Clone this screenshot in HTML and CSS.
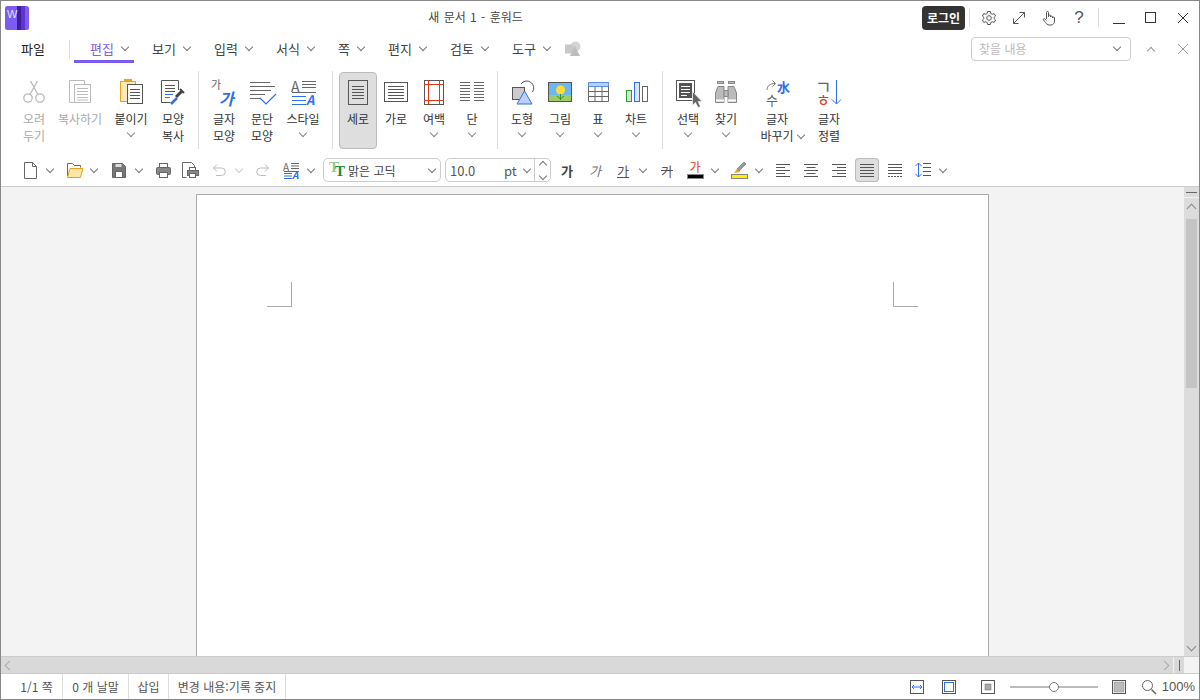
FILE: index.html
```html
<!DOCTYPE html>
<html lang="ko">
<head>
    <meta charset="UTF-8">
    <title>새 문서 1 - 훈워드</title>
    <link rel="stylesheet" href="styles.css">
</head>
<body>
<div class="window">

    <div class="titlebar">
        <svg class="logo" width="24" height="24" viewBox="0 0 24 24">
            <rect width="24" height="24" rx="2.5" fill="#7c5cf5"/>
            <rect x="12" width="4" height="24" fill="#3f1d9b"/>
            <rect x="16" width="4" height="24" fill="#5a35cf"/>
            <text x="2" y="12" class="logo-w">W</text>
        </svg>
        <div class="doc-title">새 문서 1 - 훈워드</div>
        <div class="win-controls">
            <button class="login">로그인</button>
            <span class="vsep"></span>
            <span class="win-btn first">
                <svg width="16" height="16" viewBox="0 0 16 16" fill="none" stroke="#555"><path d="M6.6 1.5h2.8l.4 2 1.5.8 1.9-.7 1.4 2.4-1.5 1.3v1.4l1.5 1.3-1.4 2.4-1.9-.7-1.5.8-.4 2H6.6l-.4-2-1.500-.8-1.900.7-1.400-2.400 1.500-1.300V7.300L1.400 6l1.400-2.400 1.900.7 1.500-.8z"/><circle cx="8" cy="8" r="2.3"/></svg>
            </span>
            <span class="win-btn">
                <svg width="14" height="14" viewBox="0 0 14 14" fill="none" stroke="#555"><path d="M1.5 12.5l11-11M7.5 1.5h5v5M1.5 7.5v5h5"/></svg>
            </span>
            <span class="win-btn">
                <svg width="16" height="16" viewBox="0 0 16 16" fill="none" stroke="#555"><path d="M5.5 9V2.5a1 1 0 0 1 2 0V7m0 0V6a1 1 0 0 1 2 0v1m0 0a1 1 0 0 1 2 0v1m0 0a1 1 0 0 1 2 0v3c0 2.5-1.5 4-3.5 4H8c-1.5 0-2.5-1-3.5-2.5L2.5 10c-.7-1 .7-2 1.5-1l1.5 1.5"/></svg>
            </span>
            <span class="win-btn help">?</span>
            <span class="vsep"></span>
            <span class="win-btn wide lead">
                <svg width="12" height="12" viewBox="0 0 12 12" fill="none" stroke="#333"><path d="M0 11.5h12"/></svg>
            </span>
            <span class="win-btn wide">
                <svg width="12" height="12" viewBox="0 0 12 12" fill="none" stroke="#333"><rect x=".5" y=".5" width="10" height="10"/></svg>
            </span>
            <span class="win-btn wide">
                <svg width="12" height="12" viewBox="0 0 12 12" fill="none" stroke="#333"><path d="M1 1l10 10M11 1L1 11"/></svg>
            </span>
        </div>
    </div>

    <div class="tabs">
        <span class="tab-file">파일</span>
        <span class="tab-sep"></span>
        <span class="tab active">편집<i class="chev"></i></span>
        <span class="tab">보기<i class="chev"></i></span>
        <span class="tab">입력<i class="chev"></i></span>
        <span class="tab">서식<i class="chev"></i></span>
        <span class="tab narrow">쪽<i class="chev"></i></span>
        <span class="tab">편지<i class="chev"></i></span>
        <span class="tab">검토<i class="chev"></i></span>
        <span class="tab">도구<i class="chev"></i></span>
        <svg class="tab-shapes" width="16" height="16" viewBox="0 0 16 16">
            <circle cx="10.5" cy="5.5" r="5" fill="#d4d4d4"/>
            <rect y="3.5" width="8" height="9" fill="#c8c8c8"/>
            <path d="M9.5 4.5L15 15H5z" fill="#bdbdbd"/>
        </svg>
        <div class="find-box">
            <span>찾을 내용</span><i class="chev"></i>
        </div>
        <span class="find-nav"><i class="chev up"></i></span>
        <span class="find-nav">
            <svg width="12" height="12" viewBox="0 0 12 12" fill="none" stroke="#999"><path d="M1 1l10 10M11 1L1 11"/></svg>
        </span>
    </div>

    <div class="ribbon">
        <button class="rb off w38">
            <svg class="ico" viewBox="0 0 32 32" fill="none" stroke="#bbb" stroke-width="1.3"><circle cx="10" cy="21" r="4.2"/><circle cx="22" cy="21" r="4.2"/><path d="M12 17.5L19.5 4M20 17.5L12.5 4"/></svg>
            <span>오려</span><span>두기</span>
        </button>
        <button class="rb off w54">
            <svg class="ico" viewBox="0 0 32 32" fill="none" stroke="#bbb"><path d="M10 25.5H5.5v-22h15V7"/><rect x="10.5" y="7.5" width="16" height="18" fill="#fff"/><path d="M13 11.5h11M13 14.5h11M13 17.5h11M13 20.5h11M13 23h11"/></svg>
            <span>복사하기</span>
        </button>
        <button class="rb w48">
            <svg class="ico" viewBox="0 0 32 32" fill="none"><rect x="5.5" y="4.5" width="15" height="20" fill="#fce9bb" stroke="#e8a317"/><rect x="9" y="2" width="8" height="3" fill="#e8a317"/><rect x="12.5" y="7.5" width="15" height="19" fill="#fff" stroke="#555"/><path d="M15 12.5h10M15 15.5h10M15 18.5h10M15 21.5h10" stroke="#555"/></svg>
            <span>붙이기</span><i class="chev"></i>
        </button>
        <button class="rb w36">
            <svg class="ico" viewBox="0 0 32 32" fill="none"><path d="M21.5 13V3.5h-17v22h9" stroke="#555"/><path d="M8 8.500h10M8 11.500h10M8 14.500h10" stroke="#555"/><path d="M8 17.500h8M8 20.500h5" stroke="#2f6fed"/><path d="M14 27l6-6" stroke="#2f6fed" stroke-width="2.5"/><path d="M19 20l6-6" stroke="#444" stroke-width="3"/><path d="M23 12l4 4" stroke="#444" stroke-width="2"/></svg>
            <span>모양</span><span>복사</span>
        </button>
        <span class="rsep"></span>
        <button class="rb w38">
            <svg class="ico" viewBox="0 0 32 32"><text x="3" y="12" class="glyph" font-size="11" fill="#666">가</text><text x="11" y="28" class="glyph" font-size="16" font-weight="700" font-style="italic" fill="#2f6fed">가</text></svg>
            <span>글자</span><span>모양</span>
        </button>
        <button class="rb w38">
            <svg class="ico" viewBox="0 0 32 32" fill="none" stroke="#666"><path d="M4 5.5h20M4 9.5h25M4 13.5h21M4 17.5h15M4 21.5h10"/><path d="M14 21l6 6 10-10" stroke="#2f6fed" stroke-width="1.2"/></svg>
            <span>문단</span><span>모양</span>
        </button>
        <button class="rb w44">
            <svg class="ico" viewBox="0 0 32 32" fill="none"><text x="4" y="15" class="glyph" font-size="14" fill="#666">A</text><path d="M15 4.5h14M15 7.500h14M15 10.500h14M5 15.500h24" stroke="#666"/><path d="M5 19.500h14M5 23.500h14M5 27.500h14" stroke="#2f6fed"/><text x="19" y="28" class="glyph" font-size="13" font-weight="700" font-style="italic" fill="#2f6fed">A</text></svg>
            <span>스타일</span><i class="chev"></i>
        </button>
        <span class="rsep"></span>
        <button class="rb w38 on">
            <svg class="ico" viewBox="0 0 32 32" fill="none" stroke="#555"><rect x="6.5" y="3.5" width="19" height="24"/><path d="M10 9.5h12M10 12.5h12M10 15.5h12M10 18.5h12M10 21.5h12"/></svg>
            <span>세로</span>
        </button>
        <button class="rb w38">
            <svg class="ico" viewBox="0 0 32 32" fill="none" stroke="#555"><rect x="4.5" y="5.5" width="23" height="19"/><path d="M8 9.5h16M8 12.5h16M8 15.5h16M8 18.5h16M8 21.5h16"/></svg>
            <span>가로</span>
        </button>
        <button class="rb w38">
            <svg class="ico" viewBox="0 0 32 32" fill="none"><rect x="6.5" y="3.5" width="19" height="24" stroke="#555"/><path d="M10.5 3v25M21.5 3v25M6 7.5h20M6 23.5h20" stroke="#e0391c"/></svg>
            <span>여백</span><i class="chev"></i>
        </button>
        <button class="rb w38">
            <svg class="ico" viewBox="0 0 32 32" fill="none" stroke="#666"><path d="M4 5.5h10M18 5.5h10M4 8.5h10M18 8.5h10M4 11.5h10M18 11.5h10M4 14.5h10M18 14.5h10M4 17.5h10M18 17.5h10M4 20.5h10M18 20.5h10M4 23.5h10M18 23.5h10"/></svg>
            <span>단</span><i class="chev"></i>
        </button>
        <span class="rsep tight"></span>
        <button class="rb w38">
            <svg class="ico" viewBox="0 0 32 32" fill="none"><rect x="6.5" y="10.5" width="12" height="12" fill="#ccc" stroke="#555"/><path d="M15 7a7 7 0 0 1 11.500 8" stroke="#555"/><path d="M11 27l7.500-13L26 27z" fill="#b9d1fb" stroke="#2f6fed"/></svg>
            <span>도형</span><i class="chev"></i>
        </button>
        <button class="rb w38">
            <svg class="ico" viewBox="0 0 32 32" fill="none"><rect x="4.5" y="5.5" width="23" height="19" fill="#6db7f0"/><rect x="5" y="18" width="22" height="6" fill="#9ccc65"/><circle cx="16.5" cy="13" r="4.5" fill="#ffdd33"/><path d="M16.5 17v6M13 19l3.500 3 3.500-3" stroke="#3c8c2c"/><rect x="4.5" y="5.5" width="23" height="19" stroke="#555"/></svg>
            <span>그림</span><i class="chev"></i>
        </button>
        <button class="rb w38">
            <svg class="ico" viewBox="0 0 32 32" fill="none"><rect x="6.5" y="5.5" width="20" height="4" fill="#b9d1fb" stroke="#5a8ff0"/><path d="M6.5 9.5v15h20v-15M6.5 14.5h20M6.5 19.5h20M13 9.5v15M20 9.5v15" stroke="#666"/></svg>
            <span>표</span><i class="chev"></i>
        </button>
        <button class="rb w38">
            <svg class="ico" viewBox="0 0 32 32" fill="none"><rect x="6.5" y="13.5" width="5" height="11" fill="#cfe8cf" stroke="#2a9d2a"/><rect x="14.5" y="5.5" width="5" height="19" fill="#dbe7fd" stroke="#2f6fed"/><rect x="22.5" y="9.5" width="5" height="15" stroke="#666"/></svg>
            <span>차트</span><i class="chev"></i>
        </button>
        <span class="rsep"></span>
        <button class="rb w38">
            <svg class="ico" viewBox="0 0 32 32" fill="none"><rect x="4.5" y="3.5" width="18" height="20" stroke="#555"/><rect x="7" y="6" width="13" height="15" fill="#555"/><path d="M9 9.5h9M9 12.5h9M9 15.5h9M9 18.5h6" stroke="#fff"/><path d="M20.5 14.5v14l3-3 2.500 5 2.500-1-2.500-5h4z" fill="#666" stroke="#fff" stroke-width=".6"/></svg>
            <span>선택</span><i class="chev"></i>
        </button>
        <button class="rb w38">
            <svg class="ico" viewBox="0 0 32 32" fill="#bbb" stroke="#888"><rect x="7.5" y="4.5" width="6" height="2"/><rect x="18.5" y="4.5" width="6" height="2"/><path d="M8 9.5h6v16H5.500V16zM24 9.500h-6v16h8.500V16z"/><path d="M14 13.5h4v6h-4z"/><path d="M6 23.500h8M18 23.500h8" stroke="#fff" stroke-width="2"/></svg>
            <span>찾기</span><i class="chev"></i>
        </button>
        <button class="rb w64">
            <svg class="ico" viewBox="0 0 32 32" fill="none"><path d="M6 13c0-4 3-6.500 8-6.500M11.500 3.500l3 3-3 3" stroke="#777"/><text x="5" y="28" class="glyph" font-size="13" fill="#666">수</text><text x="16" y="15" class="glyph" font-size="13" font-weight="700" fill="#2f6fed">水</text></svg>
            <span>글자</span><span>바꾸기<i class="chev hang"></i></span>
        </button>
        <button class="rb w38 push">
            <svg class="ico" viewBox="0 0 32 32" fill="none"><text x="2" y="17" class="glyph" font-size="18" fill="#666">ㄱ</text><text x="3" y="29" class="glyph" font-size="16" fill="#e0391c">ㅎ</text><path d="M23.500 3v24M19 22.500l4.500 4.500 4.500-4.500" stroke="#2f6fed"/></svg>
            <span>글자</span><span>정렬</span>
        </button>
    </div>

    <div class="toolbar">
        <span class="tgroup">
            <span class="tb"><svg width="24" height="24" viewBox="0 0 24 24" fill="none" stroke="#666"><path d="M6.5 4.500h8l4 4v12h-12zM14.500 4.500v4h4"/></svg></span><i class="chev tc"></i>
        </span>
        <span class="tgroup extra">
            <span class="tb"><svg width="24" height="24" viewBox="0 0 24 24" fill="none"><path d="M5.5 18V5.500h5l2 2h6v2" stroke="#666"/><path d="M8 10.500h13l-2.500 9h-13z" fill="#fce5a8" stroke="#e8a317"/></svg></span><i class="chev tc"></i>
        </span>
        <span class="tgroup">
            <span class="tb"><svg width="24" height="24" viewBox="0 0 24 24" fill="#777" stroke="#666"><path d="M5.5 5.500h10l3 3v11h-13z"/><rect x="8.5" y="13.5" width="7" height="6" fill="#fff"/><rect x="8.5" y="6" width="6" height="3" fill="#ddd" stroke="none"/></svg></span><i class="chev tc"></i>
        </span>
        <span class="tb"><svg width="24" height="24" viewBox="0 0 24 24" fill="none" stroke="#666"><rect x="8.5" y="5.5" width="8" height="4"/><rect x="5.5" y="9.5" width="14" height="7" rx="1" fill="#888"/><rect x="8.5" y="14.5" width="8" height="5" fill="#fff"/></svg></span>
        <span class="tb"><svg width="24" height="24" viewBox="0 0 24 24" fill="none" stroke="#666"><path d="M7.5 19.500h-4v-15h9l3 3v2"/><rect x="10.5" y="9.5" width="6" height="3"/><rect x="8.5" y="12.5" width="11" height="5" fill="#888"/><rect x="10.5" y="15.5" width="6" height="4" fill="#fff"/></svg></span>
        <span class="tgroup">
            <span class="tb"><svg width="24" height="24" viewBox="0 0 24 24" fill="none" stroke="#bbb"><path d="M10 6.500L6.500 10l3.500 3.500M6.500 10h8a3.750 3.750 0 0 1 0 7.500H9"/></svg></span><i class="chev tc off"></i>
        </span>
        <span class="tb"><svg width="24" height="24" viewBox="0 0 24 24" fill="none" stroke="#bbb"><path d="M14 6.500l3.500 3.500-3.500 3.500M17.500 10h-8a3.750 3.750 0 0 0 0 7.500H15"/></svg></span>
        <span class="tgroup">
            <span class="tb"><svg width="24" height="24" viewBox="0 0 24 24" fill="none"><text x="4" y="13" class="glyph" font-size="10" fill="#666">A</text><path d="M12 5.500h8M12 8h8M12 10.500h8M5 13.500h15" stroke="#666"/><path d="M5 15.500h8M5 18h8M5 20.500h8" stroke="#2f6fed"/><text x="13" y="21" class="glyph" font-size="10" font-weight="700" font-style="italic" fill="#2f6fed">A</text></svg></span><i class="chev tc"></i>
        </span>
        <div class="combo font-combo">
            <svg width="20" height="16" viewBox="0 0 20 16"><text x="1" y="10" class="serif" fill="#8fce8f">T</text><text x="7" y="14" class="serif" fill="#1d8a2e">T</text></svg>
            <span class="combo-text">맑은 고딕</span><i class="chev"></i>
        </div>
        <div class="combo size-combo">
            <span class="size-val">10.0</span>
            <span class="size-unit">pt</span><i class="chev"></i>
            <span class="spin"><i class="chev up"></i><i class="chev"></i></span>
        </div>
        <span class="tb ch bold">가</span>
        <span class="tb ch ital">가</span>
        <span class="tgroup">
            <span class="tb ch under">가</span><i class="chev tc"></i>
        </span>
        <span class="tb ch strike">가</span>
        <span class="tgroup">
            <span class="tb color"><b>가</b><u class="bar black"></u></span><i class="chev tc"></i>
        </span>
        <span class="tgroup">
            <span class="tb color">
                <svg width="20" height="16" viewBox="0 0 20 16"><path d="M8 9l7-7 2 2-7 7z" fill="#999" stroke="#777" stroke-width=".7"/><path d="M5 13l3-4 3 3z" fill="#f0a020"/></svg>
                <u class="bar yellow"></u>
            </span><i class="chev tc"></i>
        </span>
        <span class="tb"><svg width="24" height="24" viewBox="0 0 24 24" stroke="#555"><path d="M5 6.500h14M5 9.500h9M5 12.500h14M5 15.500h9M5 18.500h14"/></svg></span>
        <span class="tb"><svg width="24" height="24" viewBox="0 0 24 24" stroke="#555"><path d="M5 6.500h14M7.500 9.500h9M5 12.500h14M7.500 15.500h9M5 18.500h14"/></svg></span>
        <span class="tb"><svg width="24" height="24" viewBox="0 0 24 24" stroke="#555"><path d="M5 6.500h14M10 9.500h9M5 12.500h14M10 15.500h9M5 18.500h14"/></svg></span>
        <span class="tb on"><svg width="24" height="24" viewBox="0 0 24 24" stroke="#555"><path d="M5 6.500h14M5 9.500h14M5 12.500h14M5 15.500h14M5 18.500h14"/></svg></span>
        <span class="tb"><svg width="24" height="24" viewBox="0 0 24 24" stroke="#555"><path d="M5 6.500h14M5 9.500h14M5 12.500h14M5 15.500h14"/><path d="M5 18.500h14" stroke-dasharray="2 1"/></svg></span>
        <span class="tgroup">
            <span class="tb"><svg width="24" height="24" viewBox="0 0 24 24" fill="none"><path d="M7.500 5v14M4.500 8l3-3 3 3M4.500 16l3 3 3-3" stroke="#2f6fed"/><path d="M12 5.500h8M12 9.500h8M12 13.500h8M12 17.500h8" stroke="#555"/></svg></span><i class="chev tc"></i>
        </span>
    </div>

    <div class="workspace">
        <div class="doc-area">
            <div class="page">
                <span class="mark left"></span>
                <span class="mark right"></span>
            </div>
        </div>
        <div class="vscroll">
            <div class="split-h"></div>
            <div class="sb-btn"><i class="chev up"></i></div>
            <div class="vtrack"><div class="vthumb"></div></div>
            <div class="sb-btn"><i class="chev"></i></div>
        </div>
    </div>

    <div class="hscroll">
        <div class="htrack">
            <i class="chev lft"></i>
            <i class="chev rgt"></i>
        </div>
        <div class="split-v"></div>
    </div>

    <div class="statusbar">
        <span class="st s1">1/1 쪽</span>
        <span class="st s2">0 개 날말</span>
        <span class="st s3">삽입</span>
        <span class="st s4">변경 내용:기록 중지</span>
        <div class="st-right">
            <svg class="fit-w" width="14" height="14" viewBox="0 0 14 14" fill="none"><rect x=".5" y=".5" width="13" height="13" stroke="#555"/><path d="M2 7h10M4 5L2 7l2 2M10 5l2 2-2 2" stroke="#2f6fed"/></svg>
            <svg class="fit-p" width="14" height="14" viewBox="0 0 14 14" fill="none"><rect x=".5" y=".5" width="13" height="13" stroke="#555"/><rect x="2.5" y="2.5" width="9" height="9" stroke="#2f6fed"/></svg>
            <svg class="fit-o" width="14" height="14" viewBox="0 0 14 14" fill="none"><rect x=".5" y=".5" width="13" height="13" stroke="#555"/><rect x="4" y="4" width="6" height="6" fill="#aaa" stroke="#666" stroke-width=".5"/></svg>
            <div class="slider"><span class="knob"></span></div>
            <svg class="fit-f" width="14" height="14" viewBox="0 0 14 14" fill="none"><rect x=".5" y=".5" width="13" height="13" stroke="#555"/><rect x="2" y="2" width="10" height="10" fill="#bbb" stroke="#888" stroke-width=".5"/></svg>
            <svg class="zoom-ico" width="16" height="16" viewBox="0 0 16 16" fill="none" stroke="#666"><circle cx="6.5" cy="6.5" r="5"/><path d="M10.5 10.5l4.500 4.500" stroke-width="1.5"/></svg>
            <span class="zoom-val">100%</span>
        </div>
    </div>

</div>
</body>
</html>
```

FILE: styles.css
```css
* {
    box-sizing: border-box;
}

body {
    margin: 0;
    font-family: "Noto Sans CJK KR", "Noto Sans", sans-serif;
    font-size: 12px;
    color: #333;
    background-color: #fff;
}

.window {
    width: 1200px;
    height: 700px;
    border: 1px solid #888;
    display: flex;
    flex-direction: column;
    overflow: hidden;
    background-color: #fff;
}

/* shared chevron */
.chev {
    display: inline-block;
    width: 6px;
    height: 6px;
    border-right: 1px solid #777;
    border-bottom: 1px solid #777;
    transform: rotate(45deg);
}

.chev.up {
    transform: rotate(225deg);
}

.glyph {
    font-family: "Noto Sans CJK KR", sans-serif;
}

.serif {
    font-family: "Liberation Serif", serif;
    font-size: 15px;
    font-weight: 700;
}

svg {
    overflow: visible;
}

/* title bar */
.titlebar {
    height: 33px;
    flex: none;
    display: flex;
    align-items: center;
}

.logo {
    margin-left: 4px;
    flex: none;
}

.logo-w {
    font-family: "Liberation Sans", sans-serif;
    font-size: 11px;
    fill: #e6defc;
}

.doc-title {
    flex: 1;
    padding-bottom: 2px;
    text-align: center;
    word-spacing: 1px;
    color: #444;
}

.win-controls {
    display: flex;
    align-items: center;
    width: 277px;
    flex: none;
}

.login {
    width: 43px;
    height: 24px;
    padding: 0;
    border: 0;
    border-radius: 4px;
    background-color: #333;
    color: #fff;
    font-family: inherit;
    font-size: 12px;
    font-weight: 700;
}

.vsep {
    width: 1px;
    height: 19px;
    margin-left: 4px;
    background-color: #ddd;
}

.win-btn {
    width: 30px;
    height: 24px;
    flex: none;
    display: flex;
    align-items: center;
    justify-content: center;
}

.win-btn.first {
    margin-left: 4px;
}

.win-btn.wide {
    width: 32px;
}

.win-btn.lead {
    margin-left: 4px;
}

.win-btn.help {
    font-family: "Liberation Sans", sans-serif;
    font-size: 17px;
    color: #555;
}

/* tabs */
.tabs {
    height: 32px;
    flex: none;
    display: flex;
    align-items: center;
    font-size: 13px;
}

.tab-file {
    width: 68px;
    padding: 0 0 3px 20px;
    color: #222;
}

.tab-sep {
    width: 1px;
    height: 19px;
    margin-bottom: 2px;
    background-color: #ddd;
}

.tab {
    position: relative;
    display: flex;
    align-items: center;
    height: 32px;
    padding: 0 0 3px 16px;
    width: 62px;
    color: #444;
}

.tab.narrow {
    width: 50px;
}

.tab .chev {
    margin-left: 8px;
    margin-top: -3px;
}

.tab.active {
    color: #7a5cf0;
    width: 60px;
    margin-left: 4px;
    margin-right: 2px;
}

.tab.active::after {
    content: "";
    position: absolute;
    left: 0;
    right: 0;
    bottom: 3px;
    height: 3px;
    background-color: #7a5cf0;
}

.tab-shapes {
    margin: 0 0 2px 7px;
}

.find-box {
    width: 160px;
    height: 24px;
    margin: 0 4px 2px auto;
    padding: 0 10px 1px 7px;
    border: 1px solid #ccc;
    border-radius: 4px;
    display: flex;
    align-items: center;
    justify-content: space-between;
    font-size: 12px;
    color: #bbb;
}

.find-box .chev {
    margin-top: -3px;
}

.find-nav {
    width: 32px;
    display: flex;
    justify-content: center;
    margin-bottom: 2px;
}

.find-nav .chev {
    margin-top: 3px;
    border-color: #999;
}

/* ribbon */
.ribbon {
    height: 84px;
    flex: none;
    display: flex;
    align-items: stretch;
    padding: 5px 0 1px 14px;
}

.rb {
    display: flex;
    flex-direction: column;
    align-items: center;
    flex: none;
    height: 77px;
    margin-top: 1px;
    padding: 4px 0 0;
    border: 1px solid transparent;
    border-radius: 4px;
    background: none;
    font-family: inherit;
    font-size: 12px;
    line-height: 17px;
    color: #333;
}

.rb .ico {
    width: 32px;
    height: 32px;
    flex: none;
    margin-bottom: 1px;
}

.rb > .chev {
    margin-top: 3px;
    border-color: #888;
}

.rb.off {
    color: #aaa;
}

.rb.on {
    background-color: #dedede;
    border-color: #bbb;
}

.w36 { width: 36px; }
.w38 { width: 38px; }
.w44 { width: 44px; }
.w48 { width: 48px; }
.w54 { width: 54px; }
.w64 { width: 64px; }

.push {
    margin-left: 1px;
}

.chev.hang {
    margin-left: 4px;
    margin-right: -10px;
    margin-bottom: 3px;
}

.rsep {
    width: 1px;
    flex: none;
    margin: 0 6px 0 7px;
    background-color: #ddd;
}

.rsep.tight {
    margin: 0 5px 0 6px;
}

/* quick toolbar */
.toolbar {
    height: 37px;
    flex: none;
    display: flex;
    align-items: center;
    gap: 4px;
    padding: 4px 0 0 17px;
    border-bottom: 1px solid #ccc;
}

.tgroup {
    display: flex;
    align-items: center;
}

.tgroup.extra {
    margin-right: 1px;
}

.tb {
    width: 24px;
    height: 24px;
    flex: none;
    display: flex;
    align-items: center;
    justify-content: center;
    border-radius: 4px;
}

.tb.on {
    background-color: #dedede;
    box-shadow: inset 0 0 0 1px #bbb;
}

.chev.tc {
    margin: -3px 5px 0;
}

.chev.tc.off {
    border-color: #ccc;
}

.ch {
    font-size: 13px;
    color: #555;
}

.ch.bold {
    font-weight: 700;
    color: #444;
}

.ch.ital {
    font-style: italic;
    color: #777;
}

.ch.under {
    text-decoration: underline;
}

.ch.strike {
    text-decoration: line-through;
}

.tb.color {
    flex-direction: column;
    justify-content: flex-start;
    padding-top: 2px;
}

.tb.color b {
    font-weight: 400;
    font-size: 12px;
    line-height: 14px;
    color: #e0391c;
}

.tb.color svg {
    margin-bottom: -2px;
}

.bar {
    display: block;
    width: 17px;
    height: 5px;
    border: 1px solid #888;
}

.bar.black {
    background-color: #000;
}

.bar.yellow {
    background-color: #ffee00;
}

.combo {
    height: 24px;
    flex: none;
    display: flex;
    align-items: center;
    border: 1px solid #ccc;
    border-radius: 5px;
}

.combo .chev {
    margin-top: -3px;
}

.font-combo {
    width: 118px;
    padding: 0 4px;
}

.combo-text {
    flex: 1;
    color: #444;
}

.font-combo .chev {
    margin-right: 1px;
}

.size-combo {
    width: 106px;
    padding-left: 4px;
    font-size: 13px;
    color: #555;
}

.size-val {
    width: 54px;
}

.size-unit {
    width: 20px;
}

.spin {
    display: flex;
    flex-direction: column;
    align-items: center;
    justify-content: space-around;
    width: 16px;
    height: 100%;
    margin-left: auto;
    border-left: 1px solid #ccc;
}

.combo .spin .chev {
    margin: 0;
}

/* document area */
.workspace {
    flex: 1 1 0;
    min-height: 0;
    display: flex;
    background-color: #f3f3f3;
}

.doc-area {
    flex: 1;
    min-height: 0;
    display: flex;
    justify-content: center;
    padding-top: 7px;
}

.page {
    width: 793px;
    display: flex;
    justify-content: space-between;
    align-items: flex-start;
    padding: 87px 70px 0;
    background-color: #fff;
    border: 1px solid #aaa;
    border-bottom: 0;
}

.mark {
    width: 25px;
    height: 25px;
    border-bottom: 1px solid #aaa;
}

.mark.left {
    border-right: 1px solid #aaa;
}

.mark.right {
    border-left: 1px solid #aaa;
}

.vscroll {
    width: 15px;
    flex: none;
    display: flex;
    flex-direction: column;
    background-color: #dcdcdc;
    padding-top: 1px;
}

.split-h {
    height: 10px;
    flex: none;
    border-bottom: 1px solid #f3f3f3;
    position: relative;
}

.split-h::after {
    content: "";
    position: absolute;
    left: 2px;
    right: 2px;
    top: 4px;
    height: 1px;
    background-color: #666;
}

.sb-btn {
    height: 20px;
    flex: none;
    display: flex;
    align-items: center;
    justify-content: center;
}

.sb-btn .chev {
    width: 7px;
    height: 7px;
    border-color: #888;
}

.vtrack {
    flex: 1;
    padding: 1px 2px 0;
}

.vthumb {
    height: 169px;
    background-color: #c4c4c4;
}

/* horizontal scroll */
.hscroll {
    height: 18px;
    flex: none;
    display: flex;
    border-top: 1px solid #ccc;
    border-bottom: 1px solid #ccc;
    background-color: #f3f3f3;
}

.htrack {
    width: 1172px;
    display: flex;
    align-items: center;
    justify-content: space-between;
    padding: 0 5px;
    background-color: #d9d9d9;
}

.chev.lft {
    transform: rotate(135deg);
    border-color: #aaa;
    width: 7px;
    height: 7px;
}

.chev.rgt {
    transform: rotate(-45deg);
    border-color: #aaa;
    width: 7px;
    height: 7px;
}

.split-v {
    width: 10px;
    margin-left: 1px;
    background-color: #d9d9d9;
    display: flex;
    justify-content: center;
    align-items: center;
}

.split-v::after {
    content: "";
    width: 1px;
    height: 11px;
    background-color: #666;
}

/* status bar */
.statusbar {
    height: 25px;
    flex: none;
    display: flex;
    align-items: stretch;
    color: #555;
}

.st {
    display: flex;
    align-items: center;
    justify-content: center;
    border-right: 1px solid #ddd;
}

.s1 { width: 62px; padding-left: 10px; }
.s2 { width: 66px; }
.s3 { width: 40px; }
.s4 { width: 117px; }

.st-right {
    margin-left: auto;
    display: flex;
    align-items: center;
    padding-right: 4px;
}

.fit-p { margin-left: 18px; }
.fit-o { margin-left: 25px; }
.fit-f { margin-left: 14px; }
.zoom-ico { margin-left: 15px; }

.slider {
    position: relative;
    width: 88px;
    height: 2px;
    margin-left: 15px;
    background-color: #bbb;
}

.knob {
    position: absolute;
    left: 39px;
    top: -4px;
    width: 10px;
    height: 10px;
    border: 1px solid #777;
    border-radius: 50%;
    background-color: #fff;
}

.zoom-val {
    margin-left: 5px;
    font-family: "Liberation Sans", sans-serif;
    font-size: 13px;
}
```
